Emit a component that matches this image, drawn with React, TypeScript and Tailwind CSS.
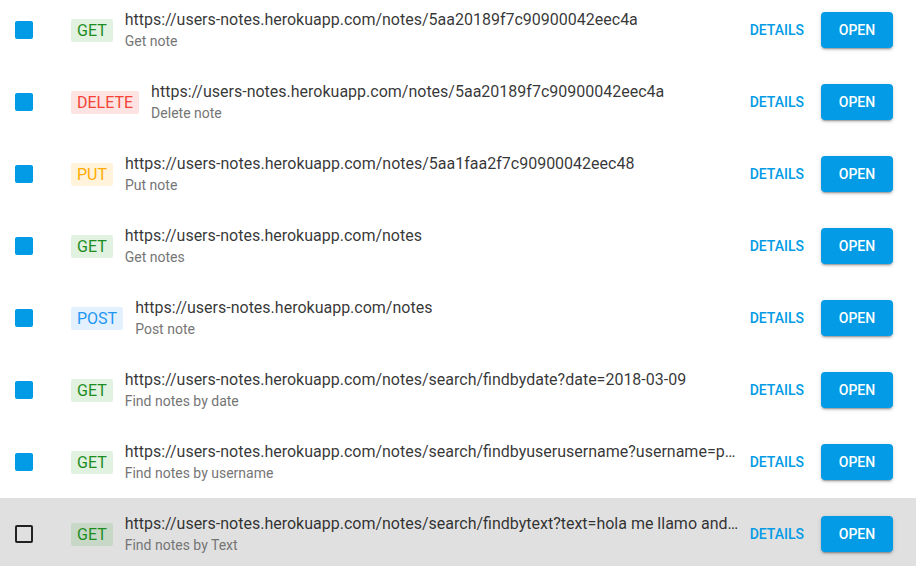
import React from "react";

type Row = { method: "GET" | "DELETE" | "PUT" | "POST"; url: string; desc: string; checked: boolean };

const rows: Row[] = [
  { method: "GET", url: "https://users-notes.herokuapp.com/notes/5aa20189f7c90900042eec4a", desc: "Get note", checked: true },
  { method: "DELETE", url: "https://users-notes.herokuapp.com/notes/5aa20189f7c90900042eec4a", desc: "Delete note", checked: true },
  { method: "PUT", url: "https://users-notes.herokuapp.com/notes/5aa1faa2f7c90900042eec48", desc: "Put note", checked: true },
  { method: "GET", url: "https://users-notes.herokuapp.com/notes", desc: "Get notes", checked: true },
  { method: "POST", url: "https://users-notes.herokuapp.com/notes", desc: "Post note", checked: true },
  { method: "GET", url: "https://users-notes.herokuapp.com/notes/search/findbydate?date=2018-03-09", desc: "Find notes by date", checked: true },
  { method: "GET", url: "https://users-notes.herokuapp.com/notes/search/findbyuserusername?username=pepito", desc: "Find notes by username", checked: true },
  { method: "GET", url: "https://users-notes.herokuapp.com/notes/search/findbytext?text=hola me llamo andres", desc: "Find notes by Text", checked: false },
];

function Badge({ method }: { method: Row["method"] }) {
  const cls =
    method === "GET"
      ? "text-[#1e8c1e] bg-[rgba(76,175,80,0.17)]"
      : method === "DELETE"
      ? "text-[#f44336] bg-[rgba(244,67,54,0.14)]"
      : method === "PUT"
      ? "text-[#ffab00] bg-[rgba(255,171,0,0.14)]"
      : "text-[#2196f3] bg-[rgba(33,150,243,0.13)]";
  return (
    <span className={`block shrink-0 h-[23px] px-[6px] rounded-[2px] text-[16px] leading-[23px] ${cls}`}>{method}</span>
  );
}

export default function App() {
  return (
    <div className="w-[916px] h-[566px] overflow-hidden bg-white" style={{ fontFamily: "Roboto, 'Liberation Sans', sans-serif" }}>
      <div className="-mt-[6px] flex flex-col">
        {rows.map((r, i) => (
          <div key={i} className={`h-[72px] flex items-center pl-[15px] pr-[23px] ${r.checked ? "bg-white" : "bg-[#e0e0e0]"}`}>
            {r.checked ? (
              <div className="w-[18px] h-[18px] rounded-[2px] bg-[#039be5] shrink-0" />
            ) : (
              <div className="w-[18px] h-[18px] rounded-[2px] border-2 border-[#212121] shrink-0" />
            )}
            <div className="ml-[38px] shrink-0">
              <Badge method={r.method} />
            </div>
            <div className="ml-[12px] flex-1 min-w-0 flex flex-col pb-[2px]">
              <div className="truncate text-[16px] leading-[24px] text-[rgba(0,0,0,0.8)]">{r.url}</div>
              <div className="truncate text-[14px] leading-[18px] text-[#757575]">{r.desc}</div>
            </div>
            <button className="shrink-0 px-[11px] h-[36px] text-[14px] font-medium text-[#039be5] uppercase">
              Details
            </button>
            <button className="shrink-0 ml-[6px] w-[72px] h-[36px] rounded-[4px] bg-[#039be5] text-white text-[14px] font-medium uppercase shadow-[0_3px_1px_-2px_rgba(0,0,0,0.2),0_2px_2px_0_rgba(0,0,0,0.14),0_1px_5px_0_rgba(0,0,0,0.12)]">
              Open
            </button>
          </div>
        ))}
      </div>
    </div>
  );
}
